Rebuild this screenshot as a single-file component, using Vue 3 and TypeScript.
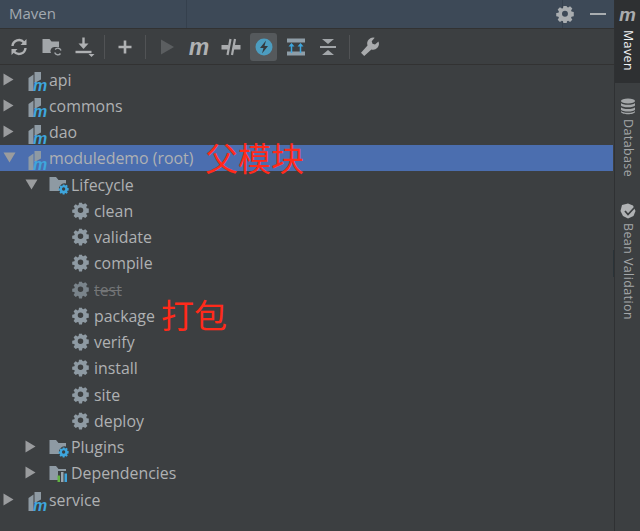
<script setup lang="ts">
type Row = { label: string; depth: number; icon: 'module' | 'life' | 'deps' | 'gear'; arrow?: 'right' | 'down'; selected?: boolean; muted?: boolean; note?: string; noteClass?: string }
const rows: Row[] = [
  { label: 'api', depth: 0, icon: 'module', arrow: 'right' },
  { label: 'commons', depth: 0, icon: 'module', arrow: 'right' },
  { label: 'dao', depth: 0, icon: 'module', arrow: 'right' },
  { label: 'moduledemo (root)', depth: 0, icon: 'module', arrow: 'down', selected: true, note: '父模块', noteClass: 'note-a' },
  { label: 'Lifecycle', depth: 1, icon: 'life', arrow: 'down' },
  { label: 'clean', depth: 2, icon: 'gear' },
  { label: 'validate', depth: 2, icon: 'gear' },
  { label: 'compile', depth: 2, icon: 'gear' },
  { label: 'test', depth: 2, icon: 'gear', muted: true },
  { label: 'package', depth: 2, icon: 'gear', note: '打包', noteClass: 'note-b' },
  { label: 'verify', depth: 2, icon: 'gear' },
  { label: 'install', depth: 2, icon: 'gear' },
  { label: 'site', depth: 2, icon: 'gear' },
  { label: 'deploy', depth: 2, icon: 'gear' },
  { label: 'Plugins', depth: 1, icon: 'life', arrow: 'right' },
  { label: 'Dependencies', depth: 1, icon: 'deps', arrow: 'right' },
  { label: 'service', depth: 0, icon: 'module', arrow: 'right' },
]
const gear = 'M9.400.8H6.600l-.4 2-1 .4-1.700-1.100-2 2 1.100 1.700-.4 1-2 .4v2.800l2 .4.4 1-1.100 1.700 2 2 1.700-1.100 1 .4.4 2h2.800l.4-2 1-.4 1.700 1.100 2-2-1.100-1.700.4-1 2-.4V6.200l-2-.4-.4-1 1.100-1.700-2-2-1.700 1.100-1-.4zM8 5.200a2.600 2.600 0 1 1 0 5.200 2.600 2.600 0 0 1 0-5.200z'
</script>

<template>
  <div class="window">
    <div class="main">
      <header class="titlebar">
        <span class="title">Maven</span>
        <div class="title-spacer"></div>
        <div class="title-actions">
          <svg class="gear-top" width="18" height="18" viewBox="0 0 16 16"><path :d="gear" fill="#a9adb0" fill-rule="evenodd" /></svg>
          <span class="minimize"></span>
        </div>
      </header>

      <div class="toolbar">
        <svg class="tool" viewBox="0 0 22 22"><g fill="none" stroke="#afb1b3" stroke-width="2.400"><path d="M4.500 10a6.500 6.500 0 0 1 11.500-3.600" /><path d="M17.500 12a6.500 6.500 0 0 1-11.500 3.600" /></g><path d="M18.500 3v6h-6zM3.500 19v-6h6z" fill="#afb1b3" /></svg>
        <svg class="tool" viewBox="0 0 22 22"><path d="M1.500 3h7l2 2.500h7.500V11h-4a4 4 0 0 0-4 6H1.500z" fill="#a2a6a9" /><path d="M20 14.500a3.300 3.300 0 0 0-5.800-1M13.700 16.500a3.300 3.300 0 0 0 5.800 1" fill="none" stroke="#a2a6a9" stroke-width="1.400" /></svg>
        <svg class="tool" viewBox="0 0 22 22"><path d="M9.500 1.500v8" stroke="#afb1b3" stroke-width="2.400" /><path d="M4.500 7.500h10L9.500 13z" fill="#afb1b3" /><path d="M1.500 16h16" stroke="#afb1b3" stroke-width="2.400" /><path d="M14.500 18h6l-3 3z" fill="#afb1b3" /></svg>
        <i class="sep first"></i>
        <svg class="tool" viewBox="0 0 22 22"><path d="M11 4.500v13M4.500 11h13" stroke="#afb1b3" stroke-width="2.600" /></svg>
        <i class="sep mid"></i>
        <svg class="tool tight" viewBox="0 0 22 22"><path d="M5 3.500 18 11 5 18.500z" fill="#5b5e60" /></svg>
        <span class="tool tight mvn">m</span>
        <svg class="tool tight" viewBox="0 0 22 22"><path d="M1.500 9h7v4.500h-7zM13.500 9h7v4.500h-7z" fill="#a9abad" /><path d="M10.500 3 7.500 19M15 3l-3 16" stroke="#a9abad" stroke-width="2.200" /></svg>
        <span class="active">
          <svg width="22" height="22" viewBox="0 0 22 22"><circle cx="11" cy="11" r="8.500" fill="#4c9dc0" /><path d="M13 4.500 7 12h3.500l-1.500 5.500L15 10h-3.500z" fill="#343a3f" /></svg>
        </span>
        <svg class="tool tight" viewBox="0 0 22 22"><path d="M2 2.500h18v4H2zM2 15.500h18v4H2z" fill="#8f9ea8" /><path d="M6.500 17V9M15.500 17V9" stroke="#3ea6dd" stroke-width="1.500" /><path d="M3.500 10.500l3-3.500 3 3.500zM12.500 10.500l3-3.500 3 3.500z" fill="#3ea6dd" /></svg>
        <svg class="tool tight" viewBox="0 0 22 22"><path d="M5 3h12l-6 5zM5 19h12l-6-5z" fill="#a2a6a9" /><path d="M3 11h16" stroke="#a2a6a9" stroke-width="2" /></svg>
        <i class="sep last"></i>
        <svg class="tool" viewBox="0 0 22 22"><path d="M19.500 5.500l-3.500 3-2.500-.8-.8-2.500 3-3.500a6 6 0 0 0-7.200 7.700L2 16.800 5.200 20l7.200-6.500a6 6 0 0 0 7.100-8z" fill="#a9abad" /></svg>
      </div>

      <div class="tree">
        <div v-for="row in rows" :key="row.label" class="row" :class="[`depth-${row.depth}`, { selected: row.selected, muted: row.muted }]">
          <span class="arrow-slot">
            <svg v-if="row.arrow === 'right'" width="11" height="13" viewBox="0 0 11 13"><path d="M.5.500 10.500 6.500.5 12.500z" fill="#9a9c9e" /></svg>
            <svg v-else-if="row.arrow === 'down'" width="13" height="11" viewBox="0 0 13 11"><path d="M.5.500h12L6.500 10.500z" fill="#9a9c9e" /></svg>
          </span>
          <svg v-if="row.icon === 'module'" class="icon" width="20" height="20" viewBox="0 0 20 20">
            <path d="M1.500 9 6.500 5.500V22H1.500z" fill="#8e9aa3" />
            <path d="M7.500 3H14v7.500L7.500 14z" fill="#8e9aa3" />
            <text x="6" y="22" class="m-badge">m</text>
          </svg>
          <svg v-else-if="row.icon === 'life'" class="icon" width="20" height="20" viewBox="0 0 20 20">
            <path d="M.5 3h6.500L9.500 6H17v3.500a5.500 5.500 0 0 0-6.500 7.500H.5z" fill="#8e9aa3" />
            <g transform="translate(9.500 10) scale(.64)"><path :d="gear" fill="#3ea6dd" fill-rule="evenodd" /></g>
          </svg>
          <svg v-else-if="row.icon === 'deps'" class="icon" width="20" height="20" viewBox="0 0 20 20">
            <path d="M.5 3h6.500L9.500 6H17v2H9v9H.5z" fill="#8e9aa3" />
            <path d="M8.500 12.500H11V19H8.500z" fill="#62b543" />
            <path d="M12 9h2.500v10H12z" fill="#9aa7b0" />
            <path d="M15.500 10.500H18V19h-2.500z" fill="#3ea6dd" />
          </svg>
          <svg v-else class="icon gear-icon" width="17" height="17" viewBox="0 0 16 16"><path :d="gear" fill="#8e9aa3" fill-rule="evenodd" /></svg>
          <span class="label">{{ row.label }}</span>
          <span v-if="row.note" class="note" :class="row.noteClass">{{ row.note }}</span>
        </div>
      </div>
    </div>

    <aside class="sidebar">
      <div class="tab tab-on">
        <span class="side-m">m</span>
        <span class="side-text on">Maven</span>
      </div>
      <div class="tab tab-db">
        <svg width="16" height="17" viewBox="0 0 16 17"><g fill="#a3a6a8"><ellipse cx="8" cy="3" rx="7" ry="2.600" /><path d="M1 5c1 2.400 13 2.400 14 0v2.500c-1 2.400-13 2.400-14 0zM1 9.200c1 2.400 13 2.400 14 0v2.500c-1 2.400-13 2.400-14 0z" /><path d="M1 13c1 2.400 13 2.400 14 0v1c-1 3-13 3-14 0z" /></g></svg>
        <span class="side-text">Database</span>
      </div>
      <div class="tab tab-bean">
        <svg width="16" height="16" viewBox="0 0 16 16"><path d="M8 .5 2 2 .5 8 3 13l5 2.500 5.500-2.500L15.500 8 13 2.500z" fill="#b0b2b4" /><path d="M5 8l3 3.500L15 4" fill="none" stroke="#3c3f41" stroke-width="1.800" /></svg>
        <span class="side-text">Bean Validation</span>
      </div>
    </aside>
    <i class="scroll-mark"></i>
  </div>
</template>

<style>
html, body { margin: 0; background: #3c3f41; }
</style>

<style scoped>
.window {
  position: relative;
  display: flex;
  width: 640px;
  height: 531px;
  overflow: hidden;
  background: #3c3f41;
  color: #afb1b3;
  font-family: "Open Sans", "Noto Sans CJK SC", sans-serif;
}
.main { width: 614px; display: flex; flex-direction: column; }
.titlebar {
  height: 28px;
  display: flex;
  align-items: stretch;
  background: #3d4957;
  border-bottom: 1px solid #323232;
}
.title { width: 187px; box-sizing: border-box; padding: 3px 0 0 9px; font-size: 15px; color: #a3aab1; border-right: 1px solid #35404d; }
.title-spacer { width: 375px; border-right: 1px solid #35404d; }
.title-actions { flex: 1; display: flex; align-items: center; padding: 0 0 1px 0; }
.gear-top { margin-left: -7px; }
.minimize { width: 16px; height: 2px; margin-left: 16px; background: #a9adb0; }
.toolbar {
  height: 35px;
  display: flex;
  align-items: center;
  padding-left: 8px;
  border-bottom: 1px solid #323232;
}
.tool { width: 22px; height: 22px; margin-right: 11px; flex: none; }
.tool.tight { margin-right: 10px; }
.sep { width: 1px; height: 24px; background: #515355; flex: none; }
.sep.first { margin: 0 9px 0 -3px; }
.sep.mid { margin: 0 10px 0 -2px; }
.sep.last { margin: 0 9px 0 0; }
.mvn { font: italic 700 23px/22px "Liberation Sans", sans-serif; text-align: center; color: #afb1b3; }
.active {
  width: 27px; height: 28px; margin: 0 8px 0 -2px; border-radius: 3px;
  background: #55595c; display: flex; align-items: center; justify-content: center; flex: none;
}
.tree { padding-top: 1px; }
.row {
  position: relative;
  height: 26.25px;
  margin-right: 1px;
  display: flex;
  align-items: center;
  font-size: 15.9px;
}
.label { padding-top: 1px; }
.depth-1 { padding-left: 22px; }
.depth-2 { padding-left: 44px; }
.arrow-slot { width: 28px; padding-left: 3px; box-sizing: border-box; display: flex; flex: none; }
.icon { flex: none; overflow: visible; margin-right: 2px; margin-left: -1px; }
.gear-icon { margin-left: 0; margin-right: 5px; }
.selected { background: #4b6eaf; }
.muted .label { text-decoration: line-through; color: #737577; }
.muted .gear-icon { opacity: .75; }
.m-badge { font: italic 700 16px "Liberation Sans", sans-serif; fill: #3ea6dd; }
.note { position: absolute; color: #ff2a1a; font-size: 33px; line-height: 36px; }
.note-a { left: 205px; top: -4px; }
.note-b { left: 161px; top: -4px; }
.sidebar {
  width: 26px;
  flex: none;
  border-left: 1px solid #2f3133;
  box-sizing: border-box;
  display: flex;
  flex-direction: column;
  align-items: center;
}
.tab { width: 100%; display: flex; flex-direction: column; align-items: center; flex: none; box-sizing: border-box; gap: 4px; }
.tab svg { flex: none; }
.tab-db { padding-top: 15px; height: 106px; }
.tab-bean { padding-top: 14px; }
.tab-on { background: #2e3032; height: 83px; padding-top: 4px; gap: 0; }
.side-m { font: italic 700 19px/22px "Liberation Sans", sans-serif; color: #a9abad; }
.side-text { writing-mode: vertical-rl; white-space: nowrap; font-size: 12.4px; letter-spacing: .45px; color: #a3a6a8; line-height: 16px; }
.side-text.on { color: #f0f2f4; margin-top: 4px; }
.scroll-mark { position: absolute; left: 613px; top: 250px; width: 1px; height: 27px; background: #2a3338; }
</style>
